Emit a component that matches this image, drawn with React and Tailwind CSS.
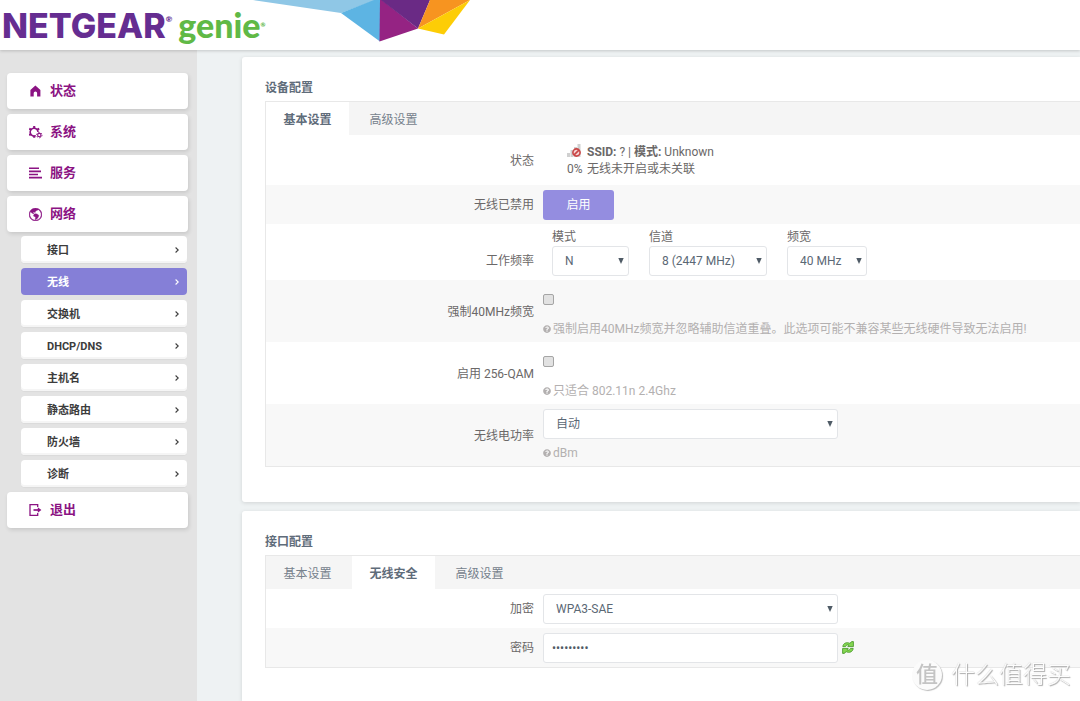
import React from 'react';
import { BsGlobeAmericas } from 'react-icons/bs';
import { FaQuestionCircle } from 'react-icons/fa';
import clsx from 'clsx';

const subItems = ['接口', '无线', '交换机', 'DHCP/DNS', '主机名', '静态路由', '防火墙', '诊断'];

function HomeIcon() {
  return (
    <svg width="14" height="14" viewBox="0 0 14 14" fill="currentColor">
      <path d="M6.4 1.6 L1.4 6 V12.4 H4.7 V9 Q4.7 7.4 6.4 7.4 Q8.1 7.4 8.1 9 V12.4 H11.4 V6 Z" />
    </svg>
  );
}

function GearsIcon() {
  return (
    <svg width="14" height="14" viewBox="0 0 14 14" fill="none" stroke="currentColor">
      <path d="M6.8 10.6 A3.9 3.9 0 1 1 9 7" strokeWidth="1.6" />
      <path
        d="M5.2 3.2V1 M2.1 4.7L0.2 3.6 M8.2 4.7L10.2 3.6 M2.1 9L0.2 10.2 M5.2 10.6V12.8"
        strokeWidth="2.1"
      />
      <circle cx="10.3" cy="10.1" r="1.7" strokeWidth="1.1" />
      <circle cx="10.3" cy="10.1" r="2.7" strokeWidth="1" strokeDasharray="1.4 1.427" />
    </svg>
  );
}

function LinesIcon() {
  return (
    <svg width="14" height="14" viewBox="0 0 14 14" fill="currentColor">
      <path d="M0 1.5h10v1.6H0z M0 4.6h12v1.6H0z M0 7.7h9v1.6H0z M0 10.8h13v1.6H0z" />
    </svg>
  );
}

function ExitIcon() {
  return (
    <svg width="14" height="14" viewBox="0 0 14 14" fill="none" stroke="currentColor" strokeWidth="1.3">
      <path d="M8.7 4V1.7H1V12.3H8.7V10" />
      <path d="M4.5 7H11" strokeWidth="1.7" />
      <path d="M8.8 4.2L12.4 7L8.8 9.8Z" fill="currentColor" stroke="none" />
    </svg>
  );
}

function MenuItem({ icon, label }) {
  return (
    <a
      href="#"
      className="flex h-9 items-center gap-[7px] rounded bg-white pl-[22px] text-[13px] font-bold text-[#8b1383] shadow-[1px_2px_4px_rgba(0,0,0,0.12)]"
    >
      {icon}
      <span>{label}</span>
    </a>
  );
}

function SubItem({ label, active }) {
  return (
    <a
      href="#"
      className={clsx(
        'flex h-[27px] items-center justify-between rounded pl-[26px] pr-2 text-[11px] font-bold',
        active
          ? 'bg-[#857fd7] text-white'
          : 'bg-white text-[#3c3c3c] shadow-[inset_0_-2px_0_#f5f5f5,0_1px_1px_rgba(0,0,0,0.04)]'
      )}
    >
      <span className="pt-[3px]">{label}</span>
      <svg width="4" height="6" viewBox="0 0 4 6" fill="none" stroke="currentColor" strokeWidth="1.1">
        <path d="M0.6 0.5L3.2 3L0.6 5.5" />
      </svg>
    </a>
  );
}

function Sidebar() {
  return (
    <nav className="flex w-[197px] shrink-0 flex-col gap-[5px] bg-[#e3e3e3] pl-[7px] pr-[9px] pt-[23px]">
      <MenuItem icon={<HomeIcon />} label="状态" />
      <MenuItem icon={<GearsIcon />} label="系统" />
      <MenuItem icon={<LinesIcon />} label="服务" />
      <MenuItem icon={<BsGlobeAmericas size={13} className="mr-px" strokeWidth="0.5" />} label="网络" />
      <div className="-mt-px flex flex-col gap-[5px] pl-[14px] pr-px">
        {subItems.map((label) => (
          <SubItem key={label} label={label} active={label === '无线'} />
        ))}
      </div>
      <MenuItem icon={<ExitIcon />} label="退出" />
    </nav>
  );
}

function Header() {
  return (
    <header className="relative z-10 flex h-[50px] shrink-0 items-start bg-white pl-[2px] font-[Lato,'Liberation_Sans',sans-serif] font-black leading-[50px] shadow-[0_1px_3px_rgba(0,0,0,0.18)]">
      <span className="font-[Inter,'Liberation_Sans',sans-serif] text-[34px] font-extrabold leading-[52px] text-[#652d91]">
        NETGEAR
      </span>
      <span className="mr-[6px] text-[8px] leading-[38px] text-[#652d91]">®</span>
      <span className="text-[34px] text-[#60b946]">genie</span>
      <span className="text-[6px] text-[#60b946]">®</span>
      <svg className="absolute left-[252px] top-0" width="220" height="43" viewBox="0 0 220 43">
        <path d="M1 0L89 13L124 0Z" fill="#8fc7e6" />
        <path d="M89 13L122 0H128V41.5Z" fill="#5db4e3" />
        <path d="M128 0H130L166 28.5L127.5 41.5Z" fill="#952383" />
        <path d="M129 0H178L166 28.5Z" fill="#6a2a85" />
        <path d="M178 0H218L166 28.5Z" fill="#f79420" />
        <path d="M218 0L192 34.5L166 28.5Z" fill="#fdcd06" />
      </svg>
    </header>
  );
}

function Select({ id, value, className }) {
  return (
    <div className={clsx('relative', className)}>
      <select
        id={id}
        defaultValue={value}
        className="h-[30px] w-full appearance-none rounded-[3px] border border-[#e3e5e8] bg-white pl-3 text-[12px] text-[#5b6875]"
      >
        <option>{value}</option>
      </select>
      <svg className="pointer-events-none absolute right-[5px] top-3" width="6" height="6" viewBox="0 0 6 6">
        <path d="M0.3 0H5.7L3 6Z" fill="#4f5b66" />
      </svg>
    </div>
  );
}

function Panel({ title, className, children }) {
  return (
    <section className={clsx('bg-white pl-[23px] pt-5 shadow-[0_1px_4px_rgba(0,0,0,0.12)]', className)}>
      <h2 className="h-6 pt-px text-[12px] font-bold leading-5 text-[#5f6c7a]">{title}</h2>
      <div className="border-y border-l border-[#e8e8e8]">{children}</div>
    </section>
  );
}

function Tabs({ items, active }) {
  return (
    <div className="flex h-[33px] gap-[3px] bg-[#f5f5f5]">
      {items.map((item) => (
        <button
          key={item}
          type="button"
          className={clsx(
            'w-[83px] pt-[2px] text-[12px]',
            item === active ? 'bg-white font-bold text-[#5f6c7a]' : 'text-[#76818c]'
          )}
        >
          {item}
        </button>
      ))}
    </div>
  );
}

function Row({ label, htmlFor, shaded, className, labelClass = 'pt-px', children }) {
  const Label = htmlFor ? 'label' : 'div';
  return (
    <div className={clsx('flex items-center', shaded && 'bg-[#f8f8f8]', className)}>
      <Label htmlFor={htmlFor} className={clsx('w-[268px] shrink-0 text-right', labelClass)}>
        {label}
      </Label>
      <div className="min-w-0 flex-1 pl-[9px]">{children}</div>
    </div>
  );
}

function Hint({ children }) {
  return (
    <p className="flex h-5 items-center gap-[2px] whitespace-nowrap text-[#b3b0b0]">
      <FaQuestionCircle size={8} />
      {children}
    </p>
  );
}

function Checkbox({ id }) {
  return (
    <input
      id={id}
      type="checkbox"
      className="mb-[14px] mt-[10px] block size-[11px] appearance-none rounded-[2px] border border-[#a5a5a5] bg-[#e2e2e2]"
    />
  );
}

function SignalIcon() {
  return (
    <svg width="14" height="15" viewBox="0 0 14 15">
      <path d="M0 9h3v4H0z M3.5 6h3v7h-3z M7 3h3v10H7z M10.5 0h3v13h-3z" fill="#d0d0d0" />
      <circle cx="9.5" cy="8.5" r="3.6" fill="#f6d4d4" stroke="#c94545" strokeWidth="1.6" />
      <path d="M7.1 10.9L11.9 6.1" stroke="#c94545" strokeWidth="1.6" />
    </svg>
  );
}

function RefreshIcon() {
  return (
    <svg width="12" height="13" viewBox="0 0 12 13" fill="#84d652" stroke="#3f9220" strokeWidth="0.8">
      <path d="M0.8 5.6C1 2.4 4.6 0.6 7.8 2.3L9.8 0.6H11.4V5.6H5.8L7 4.2C5.2 3.5 4 4.2 3.6 5.6Z" />
      <path d="M11.2 7.4C11 10.6 7.4 12.4 4.2 10.7L2.2 12.4H0.6V7.4H6.2L5 8.8C6.8 9.5 8 8.8 8.4 7.4Z" />
    </svg>
  );
}

function DevicePanel() {
  return (
    <Panel title="设备配置" className="rounded-l-[3px] pb-[35px]">
      <Tabs items={['基本设置', '高级设置']} active="基本设置" />
      <Row label="状态" className="h-[50px]">
        <div className="grid grid-cols-[20px_1fr] pl-6 pt-px leading-[17px]">
          <SignalIcon />
          <span>
            <strong>SSID:</strong> ? | <strong>模式:</strong> Unknown
          </span>
          <span>0%</span>
          <span>无线未开启或未关联</span>
        </div>
      </Row>
      <Row label="无线已禁用" shaded className="h-[39px]">
        <button type="button" className="block h-[30px] w-[71px] rounded-[3px] bg-[#948de0] text-[12px] text-white">
          启用
        </button>
      </Row>
      <Row label="工作频率" className="h-14" labelClass="pt-[18px]">
        <div className="flex gap-5 pl-[9px]">
          <div className="w-[77px]">
            <label htmlFor="mode" className="block leading-[18px]">模式</label>
            <Select id="mode" value="N" />
          </div>
          <div className="w-[118px]">
            <label htmlFor="channel" className="block leading-[18px]">信道</label>
            <Select id="channel" value="8 (2447 MHz)" />
          </div>
          <div className="w-20">
            <label htmlFor="width" className="block leading-[18px]">频宽</label>
            <Select id="width" value="40 MHz" />
          </div>
        </div>
      </Row>
      <Row label="强制40MHz频宽" htmlFor="force40" shaded className="h-[62px]">
        <Checkbox id="force40" />
        <Hint>强制启用40MHz频宽并忽略辅助信道重叠。此选项可能不兼容某些无线硬件导致无法启用!</Hint>
      </Row>
      <Row label="启用 256-QAM" htmlFor="qam" className="h-[62px]">
        <Checkbox id="qam" />
        <Hint>只适合 802.11n 2.4Ghz</Hint>
      </Row>
      <Row label="无线电功率" htmlFor="power" shaded className="h-[62px]">
        <Select id="power" value="自动" className="mb-1 mt-[2px] w-[295px]" />
        <Hint>dBm</Hint>
      </Row>
    </Panel>
  );
}

function InterfacePanel() {
  return (
    <Panel title="接口配置" className="flex-1 rounded-tl-[3px]">
      <Tabs items={['基本设置', '无线安全', '高级设置']} active="无线安全" />
      <Row label="加密" htmlFor="encryption" className="h-[39px]">
        <Select id="encryption" value="WPA3-SAE" className="w-[295px]" />
      </Row>
      <Row label="密码" htmlFor="password" shaded className="h-[39px]">
        <div className="flex items-center gap-1">
          <input
            id="password"
            type="password"
            defaultValue="password1"
            className="h-[30px] w-[295px] rounded-[3px] border border-[#e3e5e8] bg-white px-2 text-[12px] text-[#4f5b66]"
          />
          <button type="button" aria-label="显示密码">
            <RefreshIcon />
          </button>
        </div>
      </Row>
    </Panel>
  );
}

function Watermark() {
  return (
    <div className="pointer-events-none fixed bottom-[11px] right-[9px] flex items-center gap-[9px] text-[24px] font-light leading-[30px] text-[#fdfdfd] [text-shadow:1px_1px_1px_#aaa,0_0_1px_#bbb]">
      <span className="flex size-[30px] items-center justify-center rounded-full bg-[#fbfbfb] text-[22px] font-medium text-[#c4c4c4] shadow-[1px_1px_1px_#bbb] [text-shadow:none]">
        值
      </span>
      <span>什么值得买</span>
    </div>
  );
}

export default function App() {
  return (
    <div className="flex min-h-screen flex-col overflow-x-hidden bg-[#eef2f3] font-[Roboto,'Noto_Sans_CJK_SC',sans-serif] text-[12px] text-[#6b6868]">
      <Header />
      <div className="flex flex-1">
        <Sidebar />
        <main className="flex min-w-0 flex-1 flex-col gap-[9px] pl-[45px] pt-[7px]">
          <DevicePanel />
          <InterfacePanel />
        </main>
      </div>
      <Watermark />
    </div>
  );
}
